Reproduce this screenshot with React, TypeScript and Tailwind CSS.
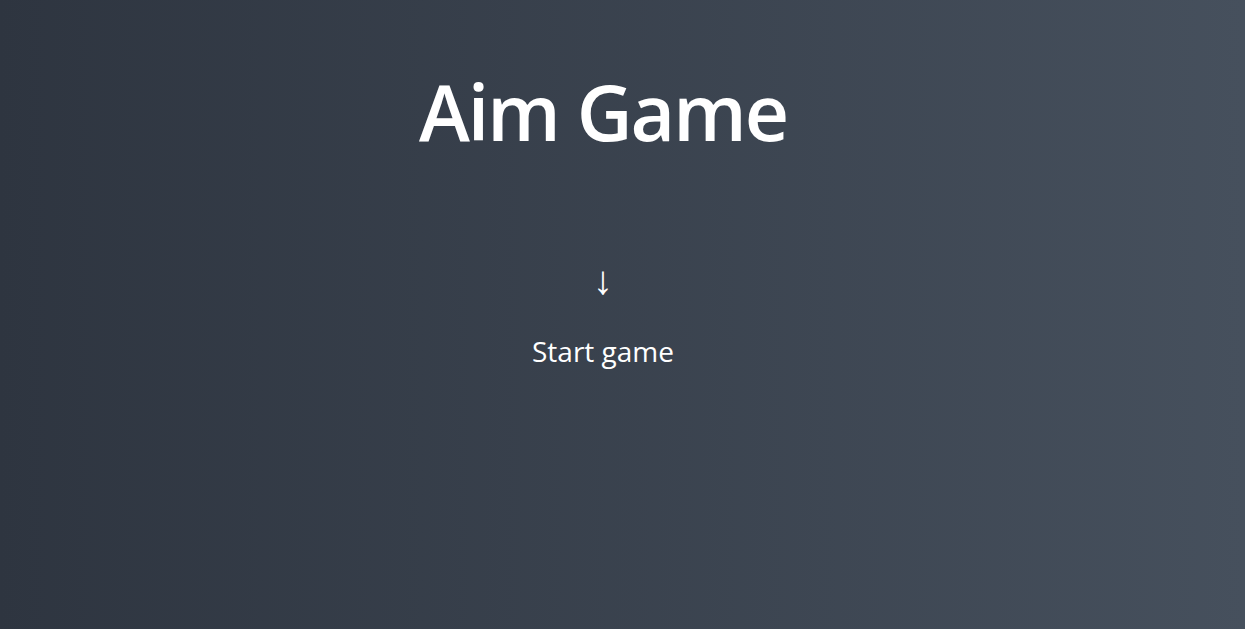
export default function App() {
  return (
    <div
      className="w-full h-[629px] overflow-hidden bg-linear-to-r from-[#2e3540] to-[#46505d] text-white flex flex-col items-center pr-[39px]"
      style={{ fontFamily: '"Open Sans", sans-serif' }}
    >
      <h1 className="text-[77px] font-semibold leading-none mt-[73px] tracking-[-2px]">Aim Game</h1>
      <div className="text-[40px] leading-none mt-[109px] font-light">↓</div>
      <div className="text-[28px] leading-none mt-[38px]">Start game</div>
    </div>
  );
}
